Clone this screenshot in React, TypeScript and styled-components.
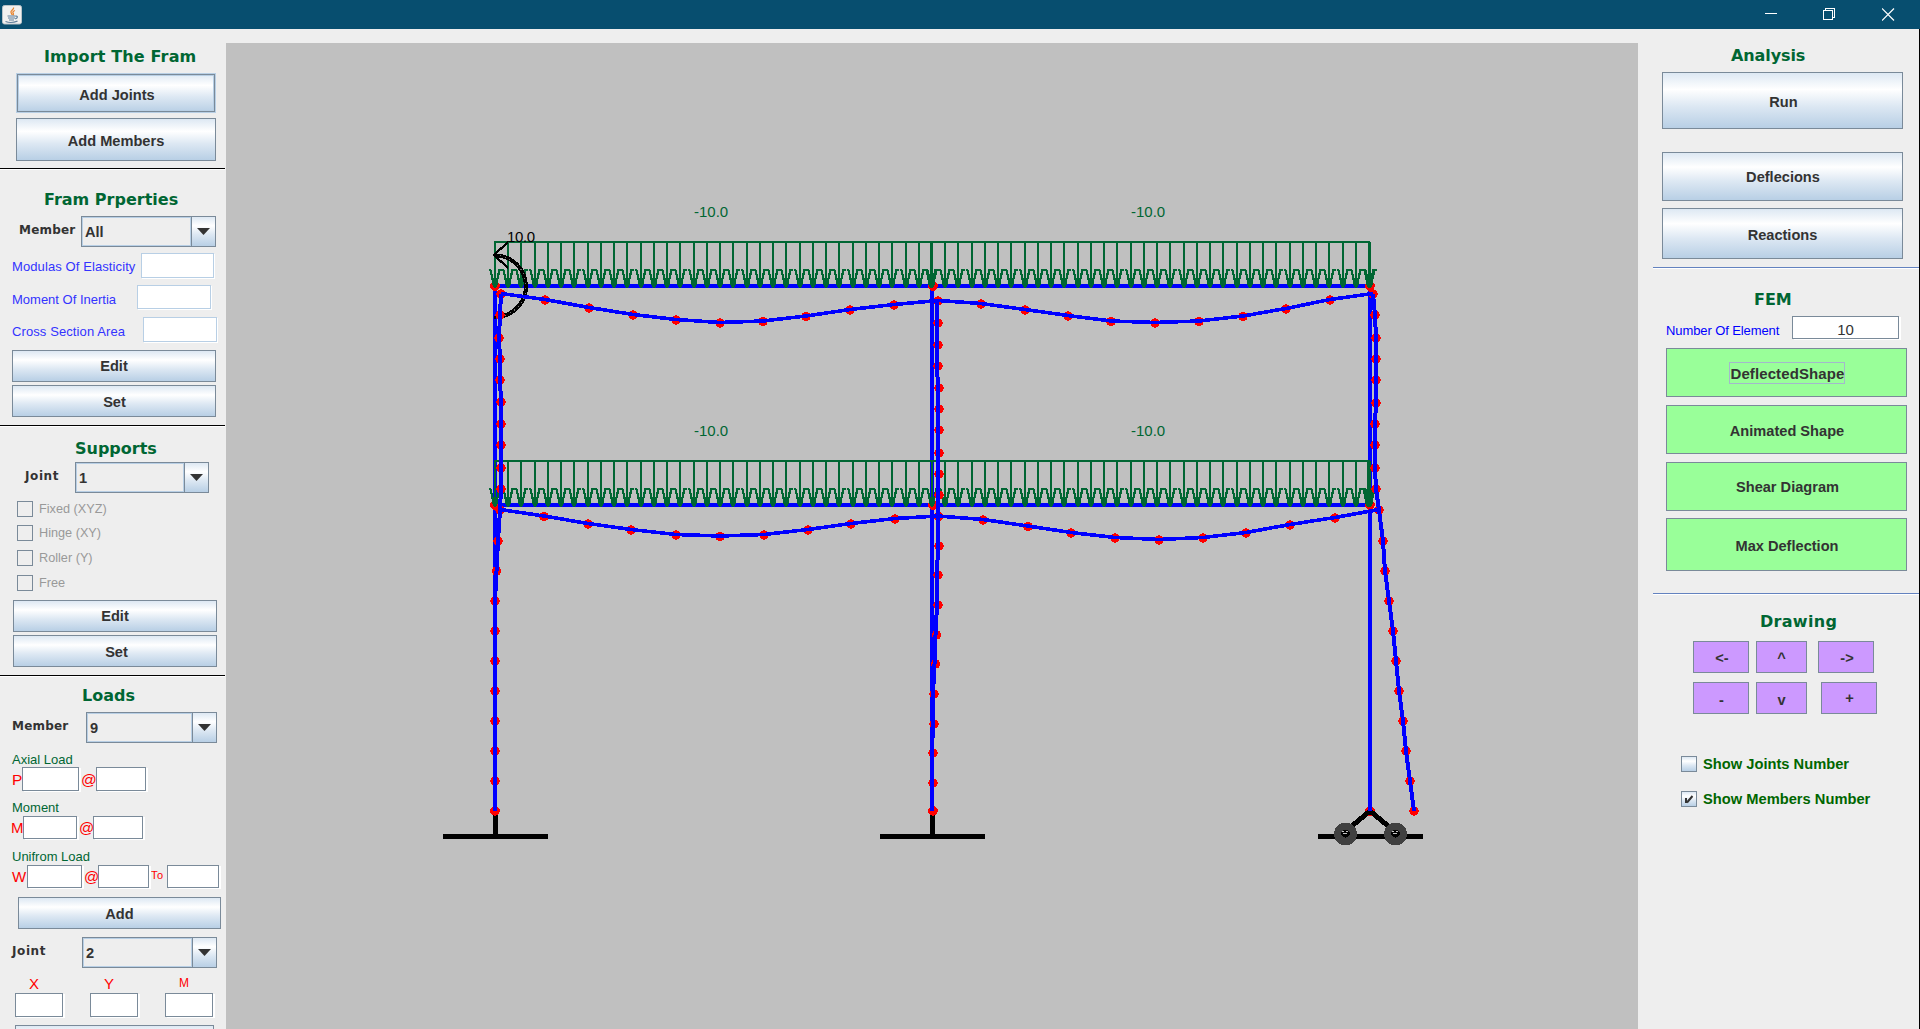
import React from 'react';
import styled, { createGlobalStyle, css } from 'styled-components';

const Global = createGlobalStyle`
  html, body { margin: 0; padding: 0; background: #eeeeee; overflow: hidden; }
  * { box-sizing: border-box; }
`;

const SANS = "'Liberation Sans', Arial, sans-serif";
const HEAD = "'DejaVu Sans', Verdana, sans-serif";
const metal = 'linear-gradient(to bottom, #dde8f3 0%, #ffffff 30%, #dde8f3 60%, #b8cfe5 100%)';

const Window = styled.div`
  width: 1920px;
  height: 1029px;
  display: flex;
  flex-direction: column;
  overflow: hidden;
  background: #eeeeee;
  font-family: ${SANS};
  color: #333333;
`;
const TitleBar = styled.header`
  height: 29px;
  flex: none;
  display: flex;
  align-items: center;
  justify-content: space-between;
  background: #074e6f;
  padding: 0 25px 0 2px;
`;
const Controls = styled.div`
  display: flex;
  align-items: center;
  gap: 46px;
  svg { display: block; }
`;
const Body = styled.div`
  display: flex;
  height: 1000px;
`;
const LeftPanel = styled.aside`
  width: 226px;
  height: 1000px;
  overflow: hidden;
`;
const Canvas = styled.main`
  width: 1412px;
  height: 986px;
  margin-top: 14px;
  background: #c0c0c0;
  svg { display: block; }
`;
const RightPanel = styled.aside`
  width: 282px;
  height: 1000px;
  border-right: 1px solid #000;
`;

const Row = styled.div<{ $mt?: number; $h: number; $pl?: number }>`
  display: flex;
  align-items: center;
  margin-top: ${p => p.$mt ?? 0}px;
  height: ${p => p.$h}px;
  padding-left: ${p => p.$pl ?? 0}px;
  overflow: visible;
`;
const Section = styled.section`
  display: flow-root;
`;
const Heading = styled.h2<{ $mt: number; $pl: number; $ls?: number }>`
  margin: ${p => p.$mt}px 0 0;
  padding-left: ${p => p.$pl}px;
  height: 20px;
  font: bold 16px/22px ${HEAD};
  letter-spacing: ${p => p.$ls ?? 0}px;
  color: #006633;
  white-space: nowrap;
`;
const Separator = styled.div<{ $mt: number; $blue?: boolean }>`
  height: 2px;
  margin: ${p => p.$mt}px 0 0 ${p => (p.$blue ? 15 : 0)}px;
  width: ${p => (p.$blue ? 'auto' : '225px')};
  border-top: 1px solid ${p => (p.$blue ? '#6382bf' : '#000')};
  border-bottom: 1px solid #fff;
`;
const Button = styled.button<{ $w: number; $h: number; $mt?: number; $ml?: number; $tone?: string; $focus?: boolean; $dx?: number; $dy?: number }>`
  display: flex;
  flex: none;
  align-items: center;
  justify-content: center;
  width: ${p => p.$w}px;
  height: ${p => p.$h}px;
  margin: ${p => p.$mt ?? 0}px 0 0 ${p => p.$ml ?? 0}px;
  padding: ${p => Math.max(0, p.$dy ?? 0)}px 0 0 ${p => p.$dx ?? 0}px;
  border: 1px solid #7a8a99;
  background: ${p => p.$tone ?? metal};
  font: bold 14.6px ${SANS};
  color: #333333;
  white-space: nowrap;
  ${p => p.$focus && css`
    border-color: #b8cfe5;
    box-shadow: inset 0 0 0 1px #7a8a99, inset 0 0 0 2px #b8cfe5;
  `}
`;
const FocusText = styled.span`
  display: block;
  width: 116px;
  height: 22px;
  padding-left: 1px;
  text-align: center;
  line-height: 22px;
  font-size: 15px;
  letter-spacing: 0.1px;
  border: 1px solid #a3b8cc;
`;
const BoldLabel = styled.span<{ $w: number; $ls?: number }>`
  flex: none;
  width: ${p => p.$w}px;
  padding-bottom: 3px;
  font: bold 12px/16px ${HEAD};
  letter-spacing: ${p => p.$ls ?? 0}px;
`;
const Text = styled.span<{ $c: string; $w?: number; $s?: number; $ls?: number; $dy?: number; $ml?: number; $up?: number; $bold?: boolean }>`
  flex: none;
  width: ${p => (p.$w === undefined ? 'auto' : p.$w + 'px')};
  margin-left: ${p => p.$ml ?? 0}px;
  padding-top: ${p => (p.$dy ?? 0) * 2}px;
  padding-bottom: ${p => (p.$up ?? 0) * 2}px;
  font-family: ${SANS};
  font-size: ${p => p.$s ?? 13}px;
  font-weight: ${p => (p.$bold ? 'bold' : 'normal')};
  line-height: 16px;
  letter-spacing: ${p => p.$ls ?? 0}px;
  color: ${p => p.$c};
  white-space: nowrap;
`;
const Field = styled.div<{ $w: number; $h: number; $ml?: number; $soft?: boolean }>`
  position: relative;
  flex: none;
  align-self: flex-start;
  width: ${p => p.$w}px;
  height: ${p => p.$h}px;
  margin-left: ${p => p.$ml ?? 0}px;
  background: #fff;
  border: 1px solid ${p => (p.$soft ? '#b8cfe5' : '#7a8a99')};
  box-shadow: ${p => (p.$soft ? '1px 1px 0 #fff' : '2px 1px 0 #fff')};
  font-size: 15px;
  line-height: 26px;
  text-align: center;
`;
const ComboBox = styled.div<{ $w: number }>`
  display: flex;
  flex: none;
  width: ${p => p.$w}px;
  height: 31px;
  border: 1px solid #7a8a99;
`;
const ComboValue = styled.div`
  flex: 1;
  border: 1px solid #b8cfe5;
  padding: 1px 0 0 2px;
  font: bold 14.6px/27px ${SANS};
`;
const ComboArrow = styled.div<{ $w: number }>`
  width: ${p => p.$w}px;
  border-left: 1px solid #7a8a99;
  background: ${metal};
  display: flex;
  align-items: center;
  justify-content: center;
`;
const Box = styled.span<{ $metal?: boolean }>`
  flex: none;
  width: 16px;
  height: 16px;
  border: 1px solid #7a8a99;
  background: ${p => (p.$metal ? metal : 'transparent')};
  svg { display: block; }
`;

const Combo = ({ w, value, arrow = 24 }: { w: number; value: string; arrow?: number }) => (
  <ComboBox $w={w}>
    <ComboValue>{value}</ComboValue>
    <ComboArrow $w={arrow}>
      <svg width="13" height="7" viewBox="0 0 13 7"><path d="M0 0h13L6.5 7z" fill="#333" /></svg>
    </ComboArrow>
  </ComboBox>
);

type Pt = [number, number];
const topBay1: Pt[] = [[501, 294], [545, 300], [589, 308], [633, 315], [676, 320], [720, 323], [763, 321.5], [806, 316.5], [850, 310], [894, 305], [938, 301]];
const topBay2: Pt[] = [[938, 301], [981, 304], [1025, 310], [1068, 316], [1111, 321.5], [1155, 323], [1199, 321.5], [1243, 316.5], [1286, 309], [1330, 300], [1373, 294]];
const lowBay1: Pt[] = [[500, 510], [544, 516.5], [588, 524], [631, 530], [676, 535], [720, 536.5], [764, 535], [808, 530], [851, 524], [895, 519], [938.5, 516.5]];
const lowBay2: Pt[] = [[938.5, 516.5], [983, 520], [1028, 526.5], [1071, 533], [1115, 538], [1159, 540], [1203, 538], [1246, 533], [1290, 525], [1335, 518], [1379, 510]];
const leftUp: Pt[] = [[501, 294], [500, 315], [499, 338], [500, 359], [500, 380], [501, 402], [501, 424], [501, 445], [501, 468], [501, 489], [500, 510]];
const leftLow: Pt[] = [[500, 510], [498, 541], [496.5, 571], [495, 601], [495, 631], [495, 661], [495, 691], [495, 721], [495, 751], [495, 781], [495, 811]];
const midUp: Pt[] = [[938, 301], [938, 323], [938, 345], [938, 366], [939, 388], [939, 409], [939, 430], [939, 453], [939, 474], [939, 495], [938.5, 516.5]];
const midLow: Pt[] = [[938.5, 516.5], [939, 546], [938, 575], [938, 605], [936.5, 635], [935.5, 664], [934, 694], [934, 724], [933, 753], [933, 783], [933, 811]];
const rightUp: Pt[] = [[1373, 294], [1375, 315], [1376, 338], [1376, 359], [1376, 380], [1376, 403], [1375, 424], [1375, 445], [1375, 468], [1376, 489], [1379, 510]];
const rightLow: Pt[] = [[1379, 510], [1383, 541], [1385, 571], [1389, 601], [1393, 631], [1396, 661], [1399, 691], [1403, 721], [1406, 751], [1410, 781], [1414, 811]];
const curves = [topBay1, topBay2, lowBay1, lowBay2, leftUp, leftLow, midUp, midLow, rightUp, rightLow];
const joints: Pt[] = [[495, 286], [933, 286], [1370, 286], [495, 505], [933, 505], [1370, 505], [495, 811], [933, 811], [1370, 811]];

const Arrow = ({ x, y }: { x: number; y: number }) => (
  <g>
    <path d={`M${x} ${y - 44}V${y + 1}`} strokeWidth="2" />
    <path
      d={`M${x - 6} ${y - 16}h1.5L${x - 3} ${y - 10}L${x - 1} ${y + 1}M${x + 7} ${y - 16}h-2.500L${x + 3} ${y - 10}L${x + 1} ${y + 1}`}
      strokeWidth="2.200"
    />
    <path d={`M${x - 3} ${y - 8}H${x + 3}L${x + 1} ${y + 2}h-2z`} fill="#006633" stroke="none" />
  </g>
);

const Load = ({ x1, x2, y }: { x1: number; x2: number; y: number }) => (
  <g stroke="#006633" strokeWidth="2" fill="none">
    <path d={`M${x1 - 1} ${y - 44}H${x2 + 1}`} />
    {Array.from({ length: 34 }, (_, i) => (
      <Arrow key={i} x={Math.round(x1 + ((x2 - x1) * i) / 33)} y={y} />
    ))}
  </g>
);

const Frame = () => (
  <svg width="1412" height="986" viewBox="226 43 1412 986" shapeRendering="crispEdges">
    {joints.map(([x, y]) => <circle key={`${x}-${y}`} cx={x} cy={y} r="4.800" fill="#f00" />)}
    <g stroke="#000" strokeWidth="5" fill="none">
      <path d="M495.500 811V835M443 836.500H548M932.500 811V835M880 836.500H985M1318 836.500H1423" />
      <path d="M1347 830L1370 811L1393 830" />
    </g>
    {[1345.5, 1395.5].map(cx => (
      <g key={cx}>
        <circle cx={cx} cy="834" r="11.500" fill="#404040" />
        <ellipse cx={cx} cy="833.5" rx="4.500" ry="4" fill="#000" />
        <path d={`M${cx - 3.5} 831.500h2M${cx + 0.5} 831.500h2M${cx - 2.5} 833.500h4`} stroke="#c0c0c0" />
      </g>
    ))}
    <path d="M495 286V811M932 286V811M1370 286V811M495 286H1370M495 505H1370" stroke="#00f" strokeWidth="4" fill="none" />
    {joints.slice(0, 6).map(([x, y]) => <circle key={`${x}-${y}`} cx={x} cy={y} r="4.800" fill="#f00" />)}
    <Load x1={495} x2={932} y={286} />
    <Load x1={932} x2={1369} y={286} />
    <Load x1={495} x2={932} y={505} />
    <Load x1={932} x2={1369} y={505} />
    <g stroke="#006633" fill="none">
      <Arrow x={931} y={286} />
      <Arrow x={1370} y={286} />
      <Arrow x={1368} y={505} />
      <Arrow x={1370} y={505} />
    </g>
    <g fill="none" stroke="#000">
      <path d="M495 255.500A31 31 0 0 1 526 286A31 31 0 0 1 503 316" strokeWidth="4" />
      <path d="M495 255.500A31 31 0 0 1 526 286A31 31 0 0 1 503 316" stroke="#777" strokeWidth="1" strokeDasharray="1 4" />
      <path d="M508 242L494 255L508 268" strokeWidth="2.200" />
      <path d="M494 317h2" strokeWidth="3" />
    </g>
    {curves.map((c, i) => (
      <g key={i}>
        {c.map(([x, y], j) => <circle key={j} cx={x} cy={y} r="4.700" fill="#f00" />)}
      </g>
    ))}
    {curves.map((c, i) => (
      <polyline key={i} points={c.map(([x, y]) => `${i > 5 && i < 8 ? x - 1 : x},${y - (i < 4 ? 0.5 : 0)}`).join(' ')} fill="none" stroke="#00f" strokeWidth={i < 4 ? 3.6 : 4} />
    ))}
    <g fontFamily={SANS} fontSize="15" fill="#006633">
      <text x="694" y="217">-10.0</text>
      <text x="1131" y="217">-10.0</text>
      <text x="694" y="436">-10.0</text>
      <text x="1131" y="436">-10.0</text>
      <text x="507" y="242" fill="#000" textLength="28">10.0</text>
    </g>
  </svg>
);

const JavaIcon = () => (
  <svg width="20" height="20" viewBox="0 0 20 20">
    <rect x="0.500" y="0.500" width="19" height="18.500" rx="2" fill="#f1f1ef" stroke="#b9c3c8" />
    <path d="M11.500 2.500c1 2-3.500 3-2.500 5 .4 1 1.200 1.500.8 2.500M13 5.500c-2 .7-2.800 1.800-1.600 3 .3.700 0 1.200-.6 1.700" fill="none" stroke="#e8842f" strokeWidth="1.300" />
    <path d="M5.500 11h8M6 13h7M7 15h5M3.500 16.500c3 1.200 8 1.200 12-.4M13.500 11.300c2.500-.8 2.600 1.700-.3 2.500" fill="none" stroke="#5f7f9b" strokeWidth="1.200" />
  </svg>
);

const RED = '#ff0000';
const BLUE = '#3333ff';
const GREEN = '#006633';

export default function App() {
  return (
    <Window>
      <Global />
      <TitleBar>
        <JavaIcon />
        <Controls>
          <svg width="13" height="13"><path d="M1 5.500h12" stroke="#fff" shapeRendering="crispEdges" /></svg>
          <svg width="13" height="13" fill="none" stroke="#fff" shapeRendering="crispEdges"><path d="M.5 2.500h9v9h-9zM2.500 2.500v-2h9v9h-2" /></svg>
          <svg width="13" height="13"><path d="M0 .5l12 12M12 .5l-12 12" stroke="#fff" strokeWidth="1.200" /></svg>
        </Controls>
      </TitleBar>
      <Body>
        <LeftPanel>
          <Section>
            <Heading $mt={17} $pl={44} $ls={0.15}>Import The Fram</Heading>
            <Button $w={200} $h={40} $mt={7} $ml={16} $focus $dx={2} $dy={3}>Add Joints</Button>
            <Button $w={200} $h={43} $mt={5} $ml={16} $dy={2}>Add Members</Button>
            <Separator $mt={7} />
          </Section>
          <Section>
            <Heading $mt={19} $pl={44}>Fram Prperties</Heading>
            <Row $mt={7} $h={31} $pl={19}>
              <BoldLabel $w={62} $ls={0.2}>Member</BoldLabel>
              <Combo w={135} value="All" />
            </Row>
            <Row $mt={6} $h={25} $pl={12}>
              <Text $c={BLUE} $w={129} $ls={0.1} $dy={1.5}>Modulas Of Elasticity</Text>
              <Field $w={73} $h={25} $soft />
            </Row>
            <Row $mt={7} $h={24} $pl={12}>
              <Text $c={BLUE} $w={125} $dy={3}>Moment Of Inertia</Text>
              <Field $w={74} $h={24} $soft />
            </Row>
            <Row $mt={8} $h={25} $pl={12}>
              <Text $c={BLUE} $w={131} $ls={0.1} $dy={2}>Cross Section Area</Text>
              <Field $w={74} $h={25} $soft />
            </Row>
            <Button $w={204} $h={32} $mt={8} $ml={12}>Edit</Button>
            <Button $w={204} $h={32} $mt={3} $ml={12} $dy={1} $dx={1}>Set</Button>
            <Separator $mt={8} />
          </Section>
          <Section>
            <Heading $mt={11} $pl={75}>Supports</Heading>
            <Row $mt={4} $h={31} $pl={25}>
              <BoldLabel $w={50} $ls={0.6}>Joint</BoldLabel>
              <Combo w={134} value="1" />
            </Row>
            {([['Fixed (XYZ)', 8], ['Hinge (XY)', 8], ['Roller (Y)', 9], ['Free', 9]] as [string, number][]).map(([label, mt]) => (
              <Row key={label} $mt={mt} $h={16} $pl={17}>
                <Box />
                <Text $c="#999999" $ml={6} $s={12.7}>{label}</Text>
              </Row>
            ))}
            <Button $w={204} $h={32} $mt={9} $ml={13}>Edit</Button>
            <Button $w={204} $h={32} $mt={3} $ml={13} $dy={1} $dx={3}>Set</Button>
            <Separator $mt={8} />
          </Section>
          <Section>
            <Heading $mt={8} $pl={82}>Loads</Heading>
            <Row $mt={7} $h={31} $pl={12}>
              <BoldLabel $w={74} $ls={0.2}>Member</BoldLabel>
              <Combo w={131} value="9" />
            </Row>
            <Row $mt={9} $h={15} $pl={12}><Text $c={GREEN}>Axial Load</Text></Row>
            <Row $h={25} $pl={12}>
              <Text $c={RED} $w={10} $s={15.5}>P</Text>
              <Field $w={57} $h={24} />
              <Text $c={RED} $w={15} $s={15.5} $ml={2}>@</Text>
              <Field $w={50} $h={24} />
            </Row>
            <Row $mt={8} $h={16} $pl={12}><Text $c={GREEN}>Moment</Text></Row>
            <Row $h={24} $pl={11}>
              <Text $c={RED} $w={12} $s={15}>M</Text>
              <Field $w={54} $h={23} />
              <Text $c={RED} $w={14} $s={15} $ml={2}>@</Text>
              <Field $w={50} $h={23} />
            </Row>
            <Row $mt={9} $h={16} $pl={12}><Text $c={GREEN}>Unifrom Load</Text></Row>
            <Row $h={24} $pl={12}>
              <Text $c={RED} $w={15} $s={15}>W</Text>
              <Field $w={55} $h={23} />
              <Text $c={RED} $w={14} $s={15} $ml={2}>@</Text>
              <Field $w={51} $h={23} />
              <Text $c={RED} $w={16} $s={11} $ls={0.4} $ml={2} $up={2}>To</Text>
              <Field $w={52} $h={23} />
            </Row>
            <Button $w={203} $h={32} $mt={8} $ml={18} $dy={1}>Add</Button>
            <Row $mt={8} $h={31} $pl={12}>
              <BoldLabel $w={70} $ls={0.6}>Joint</BoldLabel>
              <Combo w={135} value="2" />
            </Row>
            <Row $mt={9} $h={16} $pl={29}>
              <Text $c={RED} $w={75} $s={15} $up={1}>X</Text>
              <Text $c={RED} $w={75} $s={15} $up={1}>Y</Text>
              <Text $c={RED} $s={12} $up={2}>M</Text>
            </Row>
            <Row $h={25} $pl={15}>
              <Field $w={48} $h={24} />
              <Field $w={48} $h={24} $ml={27} />
              <Field $w={48} $h={24} $ml={27} />
            </Row>
            <Button $w={199} $h={32} $mt={7} $ml={15} />
          </Section>
        </LeftPanel>
        <Canvas><Frame /></Canvas>
        <RightPanel>
          <Section>
            <Heading $mt={16} $pl={93} $ls={-0.1}>Analysis</Heading>
            <Button $w={241} $h={57} $mt={7} $ml={24} $dy={2} $dx={2}>Run</Button>
            <Button $w={241} $h={49} $mt={23} $ml={24} $dx={1}>Deflecions</Button>
            <Button $w={241} $h={51} $mt={7} $ml={24} $dy={2}>Reactions</Button>
            <Separator $mt={8} $blue />
          </Section>
          <Section>
            <Heading $mt={20} $pl={116}>FEM</Heading>
            <Row $mt={7} $h={23} $pl={28}>
              <Text $c="#0000ff" $w={126} $ls={-0.1} $dy={3}>Number Of Element</Text>
              <Field $w={107} $h={23}>10</Field>
            </Row>
            <Button $w={241} $h={49} $mt={9} $ml={28} $tone="#99ff99"><FocusText>DeflectedShape</FocusText></Button>
            <Button $w={241} $h={49} $mt={8} $ml={28} $dy={2} $dx={1} $tone="#99ff99">Animated Shape</Button>
            <Button $w={241} $h={49} $mt={8} $ml={28} $dx={2} $tone="#99ff99">Shear Diagram</Button>
            <Button $w={241} $h={53} $mt={7} $ml={28} $dy={2} $dx={1} $tone="#99ff99">Max Deflection</Button>
            <Separator $mt={22} $blue />
          </Section>
          <Section>
            <Heading $mt={16} $pl={122} $ls={0.3}>Drawing</Heading>
            <Row $mt={10} $h={32} $pl={55}>
              <Button $w={56} $h={32} $dy={2} $dx={2} $tone="#cc99ff">&lt;-</Button>
              <Button $w={51} $h={32} $ml={7} $dy={2} $tone="#cc99ff">^</Button>
              <Button $w={56} $h={32} $ml={11} $dy={2} $dx={2} $tone="#cc99ff">-&gt;</Button>
            </Row>
            <Row $mt={9} $h={32} $pl={55}>
              <Button $w={56} $h={32} $dy={3} $dx={1} $tone="#cc99ff">-</Button>
              <Button $w={51} $h={32} $ml={7} $dy={3} $tone="#cc99ff">v</Button>
              <Button $w={56} $h={32} $ml={14} $dx={1} $tone="#cc99ff">+</Button>
            </Row>
            <Row $mt={42} $h={16} $pl={43}>
              <Box $metal />
              <Text $c="#006600" $ml={6} $s={14.7} $bold>Show Joints Number</Text>
            </Row>
            <Row $mt={19} $h={16} $pl={43}>
              <Box $metal>
                <svg width="14" height="14"><path d="M4 6v5M5 10.500L10.500 4" stroke="#333" strokeWidth="2" fill="none" /></svg>
              </Box>
              <Text $c="#006600" $ml={6} $s={14.7} $bold>Show Members Number</Text>
            </Row>
          </Section>
        </RightPanel>
      </Body>
    </Window>
  );
}
